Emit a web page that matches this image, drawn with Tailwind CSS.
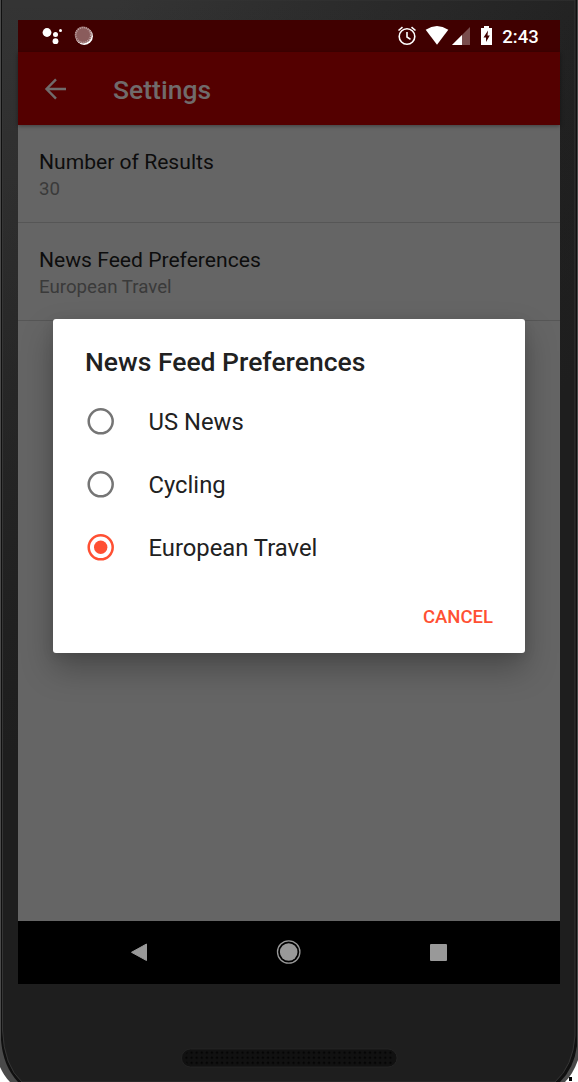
<!DOCTYPE html>
<html lang="en">
<head>
<meta charset="utf-8">
<title>Settings</title>
<script src="https://cdn.jsdelivr.net/npm/@tailwindcss/browser@4"></script>
</head>
<body class="bg-white font-[Roboto,sans-serif]">
<div class="relative h-[1082px] w-[578px] overflow-hidden">
  <!-- device body -->
  <svg class="absolute inset-0" width="578" height="1082" viewBox="0 0 578 1082">
    <defs>
      <linearGradient id="body" gradientUnits="userSpaceOnUse" x1="120" y1="0" x2="620" y2="300">
        <stop offset="0" stop-color="#343434"/><stop offset="0.75" stop-color="#212121"/><stop offset="1" stop-color="#1e1e1e"/>
      </linearGradient>
      <linearGradient id="fade" x1="0" y1="0" x2="0" y2="1">
        <stop offset="0" stop-color="#1e1e1e" stop-opacity="0"/><stop offset="0.7" stop-color="#1e1e1e"/>
      </linearGradient>
      <pattern id="holes" x="189" y="1050" width="5.1" height="5.1" patternUnits="userSpaceOnUse"><circle cx="2.5" cy="2.5" r="1.3" fill="#050505"/></pattern>
    </defs>
    <path d="M0 0H578V1060Q573 1074 565 1082H10Q4 1076 0 1067Z" fill="#4a4a4a"/>
    <path d="M1 0H577V1046Q574 1068 560 1082H18Q3 1066 1 1040Z" fill="#101010"/>
    <path d="M2.500 0H575V1036Q573 1066 555 1082H22Q4 1066 2.500 1030Z" fill="url(#body)"/>
    <path d="M2.500 0H575V1036Q573 1066 555 1082H22Q4 1066 2.500 1030Z" fill="url(#fade)" stroke="#353535"/>
    <rect x="181.500" y="1049" width="215.500" height="18" rx="9" fill="#111" stroke="#262626" stroke-width=".8"/>
    <rect x="185" y="1050" width="209" height="15.500" rx="7" fill="url(#holes)"/>
    <rect x="569" y="1077" width="3" height="4" fill="#000"/>
  </svg>

  <!-- screen -->
  <main class="relative mt-[20px] ml-[18px] flex h-[964px] w-[542px] flex-col bg-[#656565]">
    <div class="flex h-[32px] shrink-0 items-center bg-[#400000]">
      <svg width="542" height="32" viewBox="18 20 542 32">
        <g fill="#fff"><circle cx="47" cy="32.500" r="4.400"/><circle cx="55.500" cy="34.500" r="2.500"/><circle cx="60.500" cy="30.500" r="1.500"/><circle cx="55.500" cy="41.200" r="2.900"/></g>
        <circle cx="84.200" cy="36.200" r="8.700" fill="#fff"/>
        <circle cx="83.200" cy="35" r="8.500" fill="#8a5c5c"/>
        <circle cx="83.200" cy="35" r="7.500" fill="none" stroke="#c3abab" stroke-width="1.600" stroke-dasharray="1 1.100"/>
        <g fill="none" stroke="#fff" stroke-width="1.600"><circle cx="407" cy="36.500" r="7.800"/><path d="M407 32V37L410.500 39.300M398.500 30.500L402.500 27.200M411.500 27.200L415.500 30.500"/></g>
        <path d="M425.700 29.700Q437 22.500 448.300 29.700L437 44.700Z" fill="#fff"/>
        <path d="M470 27V45H452Z" fill="#fff" fill-opacity=".3"/><path d="M462 35V45H452Z" fill="#fff"/>
        <path d="M484 26H489V28H492V45H481V28H484Z" fill="#fff"/><path d="M488 30.500L483.500 37.500H486V42L489.800 35.500H487.500Z" fill="#400000"/>
        <text x="502.300" y="43" font-size="18.500" font-weight="500" fill="#fff">2:43</text>
      </svg>
    </div>
    <header class="z-10 flex h-[73px] shrink-0 items-center bg-[#540000] pl-[26px] shadow-[0_1px_4px_rgba(0,0,0,0.4)]">
      <svg width="22" height="22" viewBox="0 0 22 22" fill="none" stroke="#706b6b" stroke-width="2.400"><path d="M22 11H2.500M12 1.300L2.500 11L12 20.700"/></svg>
      <h1 class="mt-[2px] ml-[47px] text-[26.500px] leading-[30px] font-medium text-[#706b6b]">Settings</h1>
    </header>
    <section class="h-[98px] shrink-0 border-b border-[#565656] pt-[23px] pl-[21px]">
      <h2 class="text-[21.100px] leading-[27px] text-[#0d0d0d]">Number of Results</h2>
      <p class="mt-px text-[18.700px] leading-[26px] text-[#3a3a3a]">30</p>
    </section>
    <section class="h-[98px] shrink-0 border-b border-[#565656] pt-[23px] pl-[21px]">
      <h2 class="text-[21.100px] leading-[27px] text-[#0d0d0d]">News Feed Preferences</h2>
      <p class="mt-px text-[18.700px] leading-[26px] text-[#3a3a3a]">European Travel</p>
    </section>
    <nav class="mt-auto flex h-[63px] bg-black">
      <svg width="542" height="63" viewBox="18 921 542 63" fill="#999">
        <path d="M146.500 944V960.500L131.500 952.300Z" stroke="#999" stroke-width="1" stroke-linejoin="round"/>
        <circle cx="288.700" cy="952" r="8.800"/><circle cx="288.700" cy="952" r="11.200" fill="none" stroke="#999" stroke-width="1.300"/>
        <rect x="430" y="944" width="17" height="17" rx="1"/>
      </svg>
    </nav>

    <div role="dialog" class="absolute top-[299px] left-[35px] z-20 flex h-[334px] w-[472px] flex-col rounded-[3px] bg-white pl-[32px] text-[#212121] shadow-[0_16px_32px_rgba(0,0,0,0.27),0_3px_12px_rgba(0,0,0,0.1)]">
      <h2 class="mt-[27px] mb-[28px] text-[26.500px] leading-[32px] font-medium">News Feed Preferences</h2>
      <div class="flex flex-col gap-[31px] pl-[2px] text-[23.800px] leading-[32px]">
        <label class="flex items-center gap-[33.500px]"><svg class="-mt-[3px]" width="28" height="28" viewBox="0 0 28 28" fill="none"><circle cx="13.700" cy="14.300" r="12" stroke="#757575" stroke-width="2.500"/></svg><span>US News</span></label>
        <label class="flex items-center gap-[33.500px]"><svg class="-mt-[3px]" width="28" height="28" viewBox="0 0 28 28" fill="none"><circle cx="13.700" cy="14.300" r="12" stroke="#757575" stroke-width="2.500"/></svg><span>Cycling</span></label>
        <label class="flex items-center gap-[33.500px]"><svg class="-mt-[3px]" width="28" height="28" viewBox="0 0 28 28" fill="none"><circle cx="13.700" cy="14.300" r="12" stroke="#ff5033" stroke-width="2.500"/><circle cx="13.700" cy="14.300" r="6.700" fill="#ff5033"/></svg><span>European Travel</span></label>
      </div>
      <button class="mt-[41px] mr-[32px] self-end text-[18.500px] leading-[24px] font-medium text-[#ff5033]">CANCEL</button>
    </div>
  </main>
</div>
</body>
</html>
